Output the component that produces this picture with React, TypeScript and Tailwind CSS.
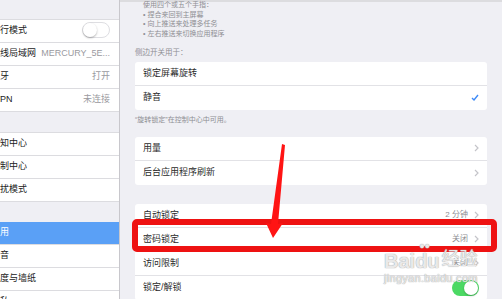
import React from "react";

const CJK = "font-['Liberation_Sans','Noto_Sans_CJK_SC',sans-serif]";

function Chevron() {
  return (
    <svg width="5" height="8" viewBox="0 0 5 8" className="ml-[6px]">
      <path d="M1 1 L4 4 L1 7" fill="none" stroke="#c4c4c9" strokeWidth="1.2" />
    </svg>
  );
}

function SideRow({ label, value, toggle, active, offset = "ml-[-9px]" }: { label: string; value?: string; toggle?: boolean; active?: boolean; offset?: string }) {
  return (
    <div
      className={`h-[23px] flex items-center justify-between pr-[9px] border-b border-[#dcdce0] ${
        active ? "bg-[#5aa0f6] text-white" : "bg-white text-[#222]"
      }`}
    >
      <span className={`${offset} text-[9px] whitespace-nowrap`}>{label}</span>
      {value && <span className="text-[9px] text-[#9a9aa0] whitespace-nowrap">{value}</span>}
      {toggle && (
        <div className="w-[28px] h-[16px] rounded-full border border-[#dedee2] bg-white mt-[-2px] flex items-center">
          <div className="w-[14px] h-[14px] rounded-full bg-white shadow-[0_1px_2px_rgba(0,0,0,0.3)]" />
        </div>
      )}
    </div>
  );
}

function Row({ label, value, chevron, check, toggle, last }: { label: string; value?: string; chevron?: boolean; check?: boolean; toggle?: boolean; last?: boolean }) {
  return (
    <div className={`h-[24px] flex items-center pl-[8px] pr-[8px] ${last ? "" : "border-b border-[#e2e2e6]"}`}>
      <span className="text-[9px] text-[#2a2a2a] flex-1 whitespace-nowrap">{label}</span>
      {value && <span className="text-[8px] text-[#8e8e93]">{value}</span>}
      {chevron && <Chevron />}
      {check && (
        <svg width="8" height="7" viewBox="0 0 8 7">
          <path d="M1 4 L3 6 L7 1" fill="none" stroke="#3d8af7" strokeWidth="1.4" />
        </svg>
      )}
      {toggle && (
        <div className="w-[27px] h-[16px] rounded-full bg-[#4cd964] flex items-center justify-end pr-[1px]">
          <div className="w-[14px] h-[14px] rounded-full bg-white shadow-[0_1px_2px_rgba(0,0,0,0.25)]" />
        </div>
      )}
    </div>
  );
}

export default function App() {
  return (
    <div className={`relative w-[502px] h-[299px] overflow-hidden flex bg-[#efeff4] ${CJK}`}>
      {/* left sidebar */}
      <div className="w-[120px] shrink-0 border-r border-[#c8c7cc] overflow-hidden">
        <div className="h-[20px] border-b border-[#dcdce0]" />
        <SideRow label="飞行模式" toggle />
        <SideRow label="无线局域网" value="MERCURY_5E..." />
        <SideRow label="蓝牙" value="打开" />
        <SideRow label="VPN" value="未连接" offset="ml-[-6px]" />
        <div className="h-[21px] border-b border-[#dcdce0]" />
        <SideRow label="通知中心" />
        <SideRow label="控制中心" />
        <SideRow label="勿扰模式" />
        <div className="h-[20px]" />
        <SideRow label="通用" active />
        <SideRow label="声音" />
        <SideRow label="亮度与墙纸" />
        <SideRow label="隐私" />
      </div>

      {/* right detail */}
      <div className="flex-1 px-[15px] border-t-2 border-[#dcdcdf]">
        <div className="pl-[8px] text-[7px] leading-[9.7px] text-[#8e8e93] mt-[-2px]">
          <p>使用四个或五个手指：</p>
          <p>• 捏合来回到主屏幕</p>
          <p>• 向上推送来处理多任务</p>
          <p>• 左右推送来切换应用程序</p>
        </div>
        <p className="mt-[9px] text-[7.5px] leading-[10px] text-[#8e8e93]">侧边开关用于：</p>
        <div className="mt-[4px] bg-white rounded-[3px]">
          <Row label="锁定屏幕旋转" />
          <Row label="静音" check last />
        </div>
        <p className="mt-[5px] text-[7px] leading-[10px] text-[#8e8e93]">“旋转锁定”在控制中心中可用。</p>
        <div className="mt-[12px] bg-white rounded-[3px]">
          <Row label="用量" chevron />
          <Row label="后台应用程序刷新" chevron last />
        </div>
        <div className="mt-[19px] bg-white rounded-[3px]">
          <Row label="自动锁定" value="2 分钟" chevron />
          <Row label="密码锁定" value="关闭" chevron />
          <Row label="访问限制" value="关闭" chevron />
          <Row label="锁定/解锁" toggle last />
        </div>
      </div>

      {/* annotation overlay */}
      <div className="absolute left-[132px] top-[219px] w-[365px] h-[33px] border-[6px] border-[#ee1212] rounded-[5px]" />
      <svg className="absolute left-0 top-0" width="502" height="299" viewBox="0 0 502 299">
        <polygon
          points="282,144 285,145 278,224 283,223 273,238 266,223 271,224"
          fill="#ff1414"
        />
      </svg>

      {/* watermark */}
      <div className="absolute left-[384px] top-[250px] text-white/75 [text-shadow:0_0_1px_#a8a8a8,0_0_1px_#a8a8a8] font-['Liberation_Sans','Noto_Sans_CJK_SC',sans-serif]">
        <div className="flex items-end leading-none">
          <span className="text-[20px] font-bold">Bai</span>
          <span className="relative text-[20px] font-bold">
            du
            <span className="absolute left-[4px] top-[-9px] text-[9px]">●●</span>
          </span>
          <span className="text-[18px] ml-[2px] mb-[3px]">经验</span>
        </div>
        <div className="text-[11px] mt-[-1px] tracking-[0.3px]">jingyan.baidu.com</div>
      </div>
    </div>
  );
}
